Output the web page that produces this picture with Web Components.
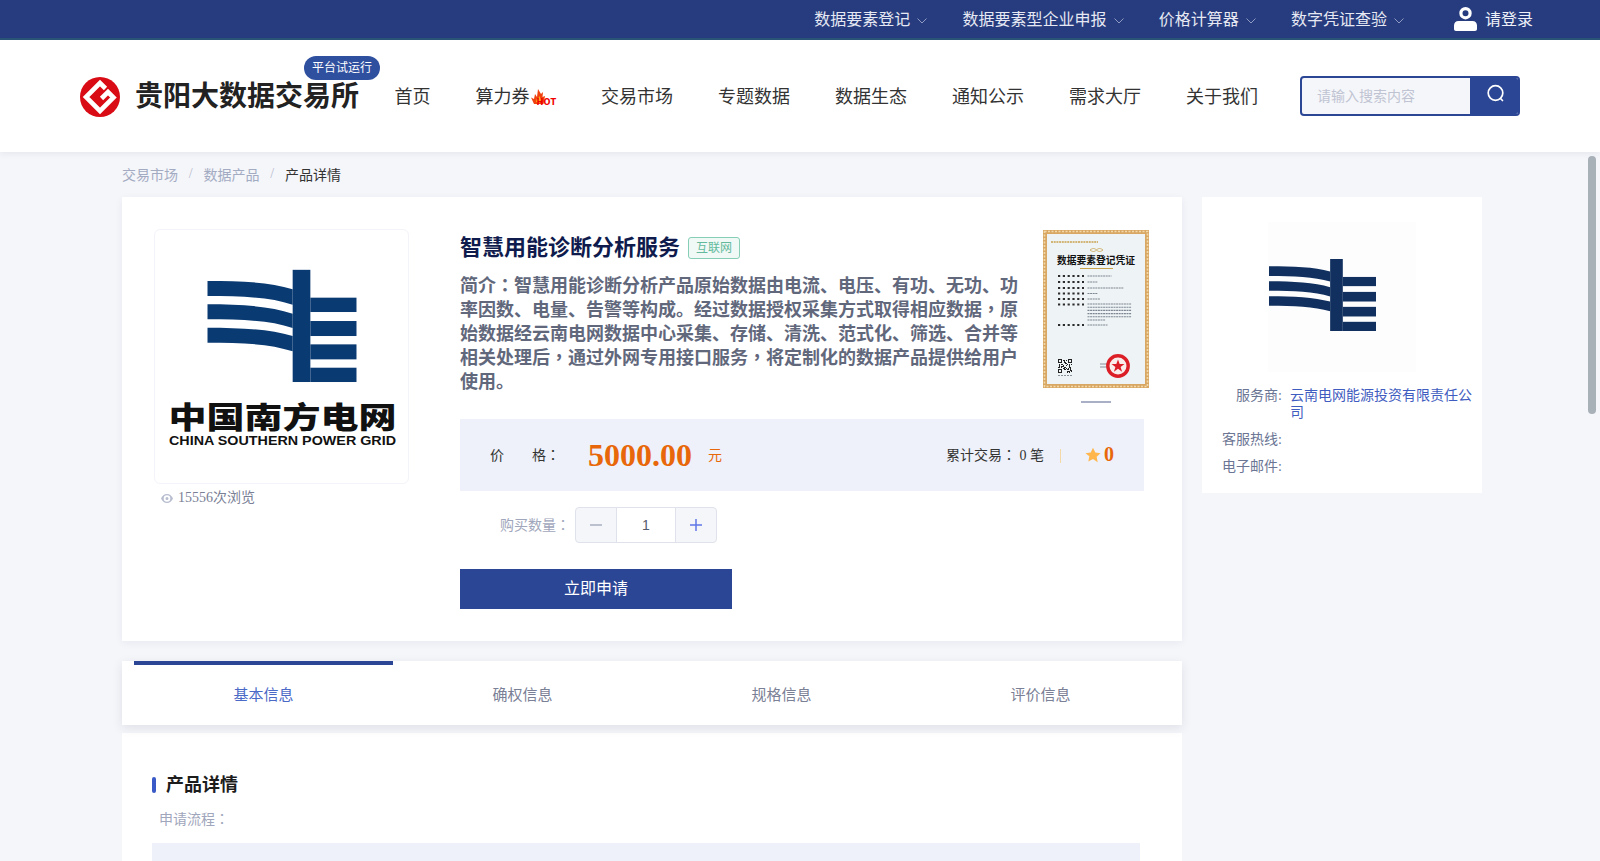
<!DOCTYPE html>
<html lang="zh-CN">
<head>
<meta charset="utf-8">
<title>智慧用能诊断分析服务</title>
<style>
html, body { margin: 0; height: 100%; overflow: hidden; }
body {
  background: #f5f6fa;
  color: #333;
  font-family: "Liberation Serif", "Noto Sans CJK SC", serif;
  font-size: 14px;
  text-spacing-trim: space-all;
}
.page { display: flex; gap: 20px; width: 1360px; margin-left: 122px; align-items: flex-start; }
.main { width: 1060px; flex: none; }
</style>
</head>
<body>
<gy-topbar>
  <gy-top-link>数据要素登记</gy-top-link>
  <gy-top-link>数据要素型企业申报</gy-top-link>
  <gy-top-link>价格计算器</gy-top-link>
  <gy-top-link>数字凭证查验</gy-top-link>
</gy-topbar>
<gy-header>
  <gy-nav-link>首页</gy-nav-link>
  <gy-nav-link hot>算力券</gy-nav-link>
  <gy-nav-link>交易市场</gy-nav-link>
  <gy-nav-link>专题数据</gy-nav-link>
  <gy-nav-link>数据生态</gy-nav-link>
  <gy-nav-link>通知公示</gy-nav-link>
  <gy-nav-link>需求大厅</gy-nav-link>
  <gy-nav-link>关于我们</gy-nav-link>
</gy-header>
<gy-breadcrumb></gy-breadcrumb>
<div class="page">
  <div class="main">
    <gy-product></gy-product>
    <gy-tabs></gy-tabs>
    <gy-detail></gy-detail>
  </div>
  <gy-provider></gy-provider>
</div>
<gy-scroll-thumb></gy-scroll-thumb>

<script>
const sans = '"Liberation Sans", "Noto Sans CJK SC", sans-serif'
// the reference centres ： and ， in the em box, the TC forms do that too
const pn = ch => `<span lang="zh-TW" style="font-family: 'Liberation Serif', 'Noto Sans CJK TC', serif">${ch}</span>`

const markShapes = `
  <rect x="458" y="163" width="53" height="337"/>
  <rect x="511" y="247" width="139" height="43"/>
  <rect x="511" y="317" width="139" height="45"/>
  <rect x="511" y="387" width="139" height="45"/>
  <rect x="511" y="457" width="139" height="43"/>
  <path d="M202 197C300 197 390 200 458 222V268C390 245 300 242 202 242Z"/>
  <path d="M202 267C300 267 390 272 458 295V338C390 315 300 312 202 312Z"/>
  <path d="M202 337C300 337 390 342 458 362V408C390 385 300 382 202 382Z"/>`

// every element here is just a template in an open shadow root
function define(name, html) {
  const tpl = document.createElement('template')
  tpl.innerHTML = html
  customElements.define(name, class extends HTMLElement {
    constructor() {
      super()
      this.attachShadow({ mode: 'open' })
      this.shadowRoot.appendChild(tpl.content.cloneNode(true))
    }
  })
}

define('gy-topbar', `
<style>
:host {
  display: flex; box-sizing: border-box; height: 40px; padding: 2px 67px 0 0;
  justify-content: flex-end; align-items: center;
  background: #273c7e; border-bottom: 2px solid #2a5577; color: #fff;
}
.links { display: flex; gap: 35.2px; }
.user { display: flex; align-items: center; gap: 8px; margin-left: 50px; font-size: 16px; line-height: 24px; color: #eef1f8; }
svg { display: block; margin-top: -2px; }
</style>
<div class="links"><slot></slot></div>
<div class="user">
  <svg width="23" height="24" viewBox="0 0 23 24"><path fill="#fff" fill-rule="evenodd" d="M11.500 0a6.200 6.200 0 1 1 0 12.400a6.200 6.200 0 1 1 0-12.400ZM11.500 3.200a3 3 0 1 0 0 6a3 3 0 1 0 0-6ZM4.500 14h14c2.800 0 4.500 2 4.500 4.500V22c0 1.300-.8 2-2 2H2c-1.200 0-2-.7-2-2v-3.500C0 16 1.700 14 4.500 14Z"/></svg>
  <span>请登录</span>
</div>`)

define('gy-top-link', `
<style>
:host { display: flex; align-items: center; gap: 7px; font-size: 16px; line-height: 24px; color: #e6e9f3; }
svg { display: block; margin-top: 2px; }
</style>
<slot></slot>
<svg width="10" height="6" viewBox="0 0 10 6"><path d="M.5.500 5 5l4.500-4.500" fill="none" stroke="#8f9bc2"/></svg>`)

define('gy-header', `
<style>
:host {
  display: flex; box-sizing: border-box; height: 112px; padding-left: 80px; align-items: center;
  background: #fff; box-shadow: 0 2px 6px rgba(30, 40, 90, .07); position: relative;
}
.brand { display: flex; align-items: center; gap: 15px; position: relative; margin: 2px 35.500px 0 0; }
.brand svg { display: block; }
.name { font-size: 28px; line-height: 40px; font-weight: 700; color: #222; white-space: nowrap; }
.badge {
  position: absolute; left: 224px; top: -21px; width: 76px; height: 24px; line-height: 24px;
  border-radius: 12px; background: #2f4f9f; color: #fff; font-size: 12px; text-align: center;
}
nav { display: flex; gap: 45px; margin-top: 1px; }
.search {
  display: flex; box-sizing: border-box; width: 220px; height: 40px; margin-left: 42px;
  border: 2px solid #2b4695; border-radius: 4px; overflow: hidden; background: #f5f6fa;
}
.search span { flex: 1; padding-left: 15px; line-height: 37px; color: #c0c4d2; font-size: 14px; }
.search i { display: flex; width: 48px; justify-content: center; padding: 6px 0 0 3px; box-sizing: border-box; background: #2b4695; }
</style>
<div class="brand">
  <svg width="40" height="40" viewBox="0 0 40 40">
    <circle cx="20" cy="20" r="20" fill="#d90c16"/>
    <path d="M25.500 11.500 20 6 6 20l14 14 13.500-13.500-5.500-5.500-6.500 6.500" fill="none" stroke="#fff" stroke-width="4.600"/>
  </svg>
  <div class="name">贵阳大数据交易所</div>
  <div class="badge">平台试运行</div>
</div>
<nav><slot></slot></nav>
<div class="search">
  <span>请输入搜索内容</span>
  <i><svg width="20" height="20" viewBox="0 0 20 20"><circle cx="9.500" cy="9" r="7.300" fill="none" stroke="#fff" stroke-width="1.700"/><path d="M14.500 14.500 16.500 16.500" stroke="#fff" stroke-width="1.700" stroke-linecap="round"/></svg></i>
</div>`)

define('gy-nav-link', `
<style>
:host { display: flex; align-items: center; font-size: 18px; line-height: 26px; color: #333; position: relative; }
:host([hot]) { padding-right: 26.500px; }
svg { display: none; position: absolute; right: -1px; top: 5px; }
:host([hot]) svg { display: block; }
</style>
<slot></slot>
<svg width="27" height="16" viewBox="0 0 27 16">
  <path fill="#f0420f" d="M1 8.500 4 10 5 5l2 3 1-8 3 5 2-2-.5 5L15 7l-1.500 8H4Z"/>
  <path fill="#ffb21c" d="M6 13 6.800 9.500 8 10.500 9.500 7 11 11l-1 3Z"/>
  <text x="6.500" y="15.500" font-family="DejaVu Sans" font-weight="700" font-size="8.500" fill="#f00000" textLength="19.500" lengthAdjust="spacingAndGlyphs">HOT</text>
</svg>`)

define('gy-breadcrumb', `
<style>
:host { display: flex; box-sizing: border-box; height: 45px; padding: 0 0 2px 122px; align-items: center; font-size: 14px; color: #a3abc2; }
i { font-style: normal; margin: 0 10.800px; color: #b5bbcd; }
b { font-weight: 400; color: #333; }
</style>
<span>交易市场</span><i>/</i><span>数据产品</span><i>/</i><b>产品详情</b>`)

define('gy-csg-logo', `
<style>
:host { display: block; width: 255px; height: 255px; }
svg { display: block; }
</style>
<svg width="255" height="255" viewBox="0 0 255 255">
  <svg x="52.300" y="39.500" width="149.400" height="112.700" viewBox="202 163 448 337" fill="#0a3a72">${markShapes}</svg>
  <text x="13.500" y="198" font-family="Noto Sans CJK SC" font-weight="900" font-size="30" fill="#111" textLength="228" lengthAdjust="spacingAndGlyphs">中国南方电网</text>
  <text x="14" y="214.500" font-family="Liberation Sans" font-weight="700" font-size="13" fill="#111" textLength="227" lengthAdjust="spacingAndGlyphs">CHINA SOUTHERN POWER GRID</text>
</svg>`)

define('gy-cert', `
<style>
:host { display: block; width: 106px; height: 158px; }
svg { display: block; }
</style>
<svg width="106" height="158" viewBox="0 0 106 158">
  <rect width="106" height="158" fill="#d8a763"/>
  <rect x="1.500" y="1.500" width="103" height="155" fill="none" stroke="#f2d9ab" stroke-width="1.600" stroke-dasharray="2 1.500"/>
  <rect x="4" y="4" width="98" height="150" fill="#eef3f5"/>
  <path d="M8 12h47" stroke="#c9a24e" stroke-width="1.300" stroke-dasharray="2 .7"/>
  <path d="M47 20c2.500-2 4.500-2 6.500 0c2-2 4-2 6.500 0c-2.500 2-4.500 2-6.500 0c-2 2-4 2-6.500 0Z" fill="none" stroke="#c9a24e" stroke-width=".8"/>
  <text x="14" y="34" font-family="Noto Sans CJK SC" font-weight="700" font-size="10" fill="#111" textLength="78" lengthAdjust="spacingAndGlyphs">数据要素登记凭证</text>
  <path d="M37 38.500h33" stroke="#c9a24e" stroke-width="1.200"/>
  <g stroke="#2b2b2b" stroke-width="1.800" stroke-dasharray="2.200 2.600">
    <path d="M15 46h26M15 52h26M15 58h26M15 63.500h26M15 69h26M15 74.500h26M15 95h26"/>
  </g>
  <g stroke="#7d8792" stroke-width="1.100" stroke-dasharray="2 .6">
    <path d="M44.500 46h24M44.500 52h10M44.500 58h36M44.500 63.500h10M44.500 69h13"/>
    <path d="M44.500 74h44M44.500 77.200h44M44.500 80.400h44M44.500 83.600h44M44.500 86.800h44M44.500 90h18M44.500 95h20"/>
  </g>
  <g id="qr" fill="#222"></g>
  <path d="M15 145.500h14" stroke="#8a929a" stroke-dasharray="2 1"/>
  <path d="M57 134h10M57 137h8" stroke="#7d8792" stroke-width=".9"/>
  <circle cx="75" cy="136" r="10.200" fill="#f9eeec" stroke="#dc1f27" stroke-width="3.400"/>
  <path d="M75 129.500l1.700 4.600h4.800l-3.900 2.900 1.500 4.700-4.100-2.900-4.100 2.900 1.500-4.700-3.900-2.900h4.800Z" fill="#dc1f27"/>
</svg>`)

define('gy-qty', `
<style>
:host {
  display: flex; box-sizing: border-box; width: 142px; height: 36px; background: #f5f6fa;
  border: 1px solid #dfe2ea; border-radius: 4px; overflow: hidden;
}
span { display: flex; width: 40px; align-items: center; justify-content: center; flex: none; }
b {
  flex: 1; background: #fff; border: solid #dfe2ea; border-width: 0 1px; text-align: center;
  font: 400 14px/34px ${sans}; color: #555b6e;
}
</style>
<span><svg width="12" height="12" viewBox="0 0 12 12"><path d="M0 6h12" stroke="#a9afc2" stroke-width="1.300"/></svg></span>
<b>1</b>
<span><svg width="12" height="12" viewBox="0 0 12 12"><path d="M0 6h12M6 0v12" stroke="#5f77e6" stroke-width="1.500"/></svg></span>`)

define('gy-product', `
<style>
:host {
  display: flex; box-sizing: border-box; height: 444px; padding: 32px 38px 32px 32px; gap: 51px;
  background: #fff; box-shadow: 0 2px 8px rgba(30, 40, 90, .06);
}
.pic { width: 255px; flex: none; }
.frame { box-sizing: border-box; width: 255px; height: 255px; border: 1px solid #f3f4f9; border-radius: 6px; }
.views { display: flex; align-items: center; gap: 5px; margin-top: 4px; padding-left: 7px; line-height: 20px; color: #7a8095; }
.info { width: 684px; flex: none; }
.top { display: flex; }
.text { width: 558px; flex: none; margin-right: 25px; }
.title { display: flex; align-items: center; gap: 8px; margin-bottom: 9px; height: 36px; }
h1 { margin: -5px 0 0; font-size: 22px; font-weight: 700; color: #0f1b4d; }
.tag {
  box-sizing: border-box; width: 52px; height: 22px; line-height: 20px; margin-top: 2px; text-align: center;
  border: 1px solid #86cfb6; border-radius: 3px; background: #f0f9f6; color: #62b99c; font-size: 12px;
}
.intro { margin: 0 0 25px; font-size: 18px; line-height: 24px; font-weight: 700; color: #62687c; }
.cert { margin-top: 1px; }
.cert i { display: block; width: 30px; height: 2px; margin: 13px auto 0; background: #a9b0c6; }
.price {
  display: flex; align-items: center; box-sizing: border-box; height: 72px; padding: 0 30px; background: #eef1f9;
  color: #333;
}
.price > span:first-child, .unit, .stats > span:first-child { margin-top: -2px; }
.amount { margin-left: 28px; font-size: 32px; font-weight: 700; color: #e8670a; line-height: 40px; }
.unit { margin-left: 16px; color: #e8670a; }
.stats { display: flex; align-items: center; margin-left: auto; }
.stats hr { width: 1px; height: 14px; border: 0; margin: 2px 24px 0 16px; background: #f3d9a6; }
.score { margin: -2px 0 0 3px; font-size: 20px; font-weight: 700; color: #e8670a; line-height: 24px; }
.buy { display: flex; align-items: center; gap: 5px; margin-top: 16px; padding-left: 40px; color: #a0a6bb; }
.buy span { margin-top: -2px; }
.apply {
  width: 272px; height: 40px; margin-top: 26px; background: #2b4695; color: #fff;
  font-size: 16px; line-height: 40px; text-align: center;
}
svg { display: block; }
</style>
<div class="pic">
  <div class="frame"><gy-csg-logo></gy-csg-logo></div>
  <div class="views">
    <svg width="12" height="9" viewBox="0 0 12 9"><path fill="#b7bdcf" fill-rule="evenodd" d="M6 0c2.700 0 4.900 1.800 6 4.500C10.900 7.200 8.700 9 6 9S1.100 7.200 0 4.500C1.100 1.800 3.300 0 6 0ZM6 1.200a3.300 3.300 0 1 0 0 6.600a3.300 3.300 0 1 0 0-6.600ZM6 3a1.500 1.500 0 1 1 0 3a1.500 1.500 0 1 1 0-3Z"/></svg>
    <span>15556次浏览</span>
  </div>
</div>
<div class="info">
  <div class="top">
    <div class="text">
      <div class="title"><h1>智慧用能诊断分析服务</h1><span class="tag">互联网</span></div>
      <p class="intro">简介${pn('：')}智慧用能诊断分析产品原始数据由电流、电压、有功、无功、功率因数、电量、告警等构成。经过数据授权采集方式取得相应数据${pn('，')}原始数据经云南电网数据中心采集、存储、清洗、范式化、筛选、合并等相关处理后${pn('，')}通过外网专用接口服务${pn('，')}将定制化的数据产品提供给用户使用。</p>
    </div>
    <div class="cert"><gy-cert></gy-cert><i></i></div>
  </div>
  <div class="price">
    <span>价&emsp;&emsp;格${pn('：')}</span>
    <span class="amount">5000.00</span>
    <span class="unit">元</span>
    <div class="stats">
      <span>累计交易${pn('：')} 0 笔</span>
      <hr>
      <svg width="16" height="16" viewBox="0 0 24 24"><path fill="#ffb74d" d="M12 1l3.400 7.300 7.900 1-5.800 5.500 1.500 7.900L12 18l-7 3.700 1.500-7.900L.7 9.300l7.900-1Z"/></svg>
      <span class="score">0</span>
    </div>
  </div>
  <div class="buy"><span>购买数量${pn('：')}</span><gy-qty></gy-qty></div>
  <div class="apply">立即申请</div>
</div>`)

define('gy-tabs', `
<style>
:host {
  display: flex; box-sizing: border-box; height: 64px; margin-top: 20px; padding: 0 12px;
  background: #fff; box-shadow: 0 3px 10px rgba(30, 40, 60, .1); position: relative;
}
div { flex: 1; box-sizing: border-box; border-top: 4px solid transparent; line-height: 60px; text-align: center; font-size: 15px; color: #7a8095; }
.on { border-top-color: #2b4695; color: #4b69c6; }
</style>
<div class="on">基本信息</div><div>确权信息</div><div>规格信息</div><div>评价信息</div>`)

define('gy-detail', `
<style>
:host { display: block; box-sizing: border-box; height: 128px; margin-top: 8px; padding: 44px 42px 0 30px; background: #fff; overflow: hidden; }
h2 { display: flex; align-items: center; gap: 10px; height: 16px; margin: 0; font-size: 18px; font-weight: 700; color: #1c1c1c; }
h2::before { content: ""; width: 4px; height: 16px; border-radius: 2px; background: #3a5bc7; }
h2 span { margin-top: -4px; }
p { margin: 17px 0 13px 7px; line-height: 20px; color: #a0a6bb; }
div { height: 18px; background: #eef1f9; }
</style>
<h2><span>产品详情</span></h2>
<p>申请流程${pn('：')}</p>
<div></div>`)

define('gy-provider', `
<style>
:host { display: block; box-sizing: border-box; width: 280px; height: 296px; padding: 25px 10px 0 0; background: #fff; }
.logo {
  box-sizing: border-box; width: 148px; height: 150px; margin: 0 0 15px 66px; padding: 37px 0 0 1px;
  background: #fdfdfe;
}
.logo svg { display: block; }
dl { margin: 0; line-height: 17px; display: grid; grid-template-columns: 80px 1fr; column-gap: 8px; row-gap: 10px; }
dt { text-align: right; color: #6b7594; }
dd { margin: 0; color: #3f5cc0; }
</style>
<div class="logo"><svg width="107" height="72" viewBox="202 163 448 337" preserveAspectRatio="none" fill="#12305f">${markShapes}</svg></div>
<dl>
  <dt>服务商:</dt><dd>云南电网能源投资有限责任公司</dd>
  <dt>客服热线:</dt><dd></dd>
  <dt>电子邮件:</dt><dd></dd>
</dl>`)

define('gy-scroll-thumb', `
<style>
:host { position: fixed; right: 4px; top: 156px; width: 8px; height: 258px; border-radius: 4px; background: #a8b0b8; }
</style>`)

// fill the little qr square on the certificate
const qr = document.querySelector('gy-product').shadowRoot.querySelector('gy-cert').shadowRoot.getElementById('qr')
const finders = [[15, 129], [25, 129], [15, 139]]
let cells = ''
let seed = 7
for (let y = 0; y < 14; y++) {
  for (let x = 0; x < 14; x++) {
    seed = (seed * 75 + 74) % 65537
    const inFinder = (x < 5 && y < 5) || (x > 8 && y < 5) || (x < 5 && y > 8)
    if (!inFinder && seed % 2) cells += `<rect x="${15 + x}" y="${129 + y}" width="1" height="1"/>`
  }
}
for (const [x, y] of finders) {
  cells += `<path fill-rule="evenodd" d="M${x} ${y}h4v4h-4ZM${x + 1} ${y + 1}v2h2v-2Z"/>`
}
qr.innerHTML = cells
</script>
</body>
</html>
